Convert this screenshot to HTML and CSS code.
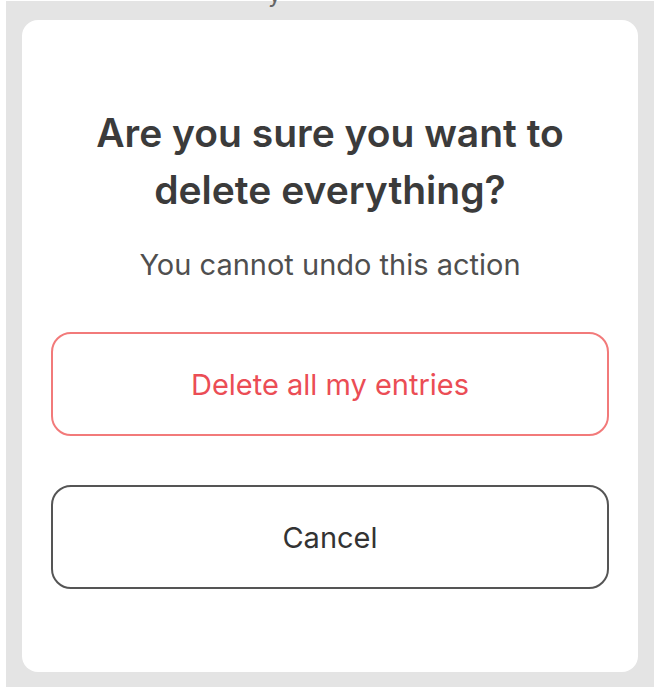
FILE: index.html
```html
<!DOCTYPE html>
<html>
<head>
<meta charset="utf-8">
<link rel="stylesheet" href="styles.css">
</head>
<body>
<div class="backdrop">
  <span class="behind">y</span>
  <div class="dialog">
    <h1 class="title">Are you sure you want to delete everything?</h1>
    <p class="subtitle">You cannot undo this action</p>
    <button class="btn btn-danger">Delete all my entries</button>
    <button class="btn btn-cancel">Cancel</button>
  </div>
</div>
</body>
</html>
```
FILE: styles.css
```css
html, body {
  margin: 0;
  padding: 0;
  background: #ffffff;
  width: 660px;
  height: 687px;
  overflow: hidden;
  font-family: Inter, "Noto Sans", sans-serif;
}
.backdrop {
  position: relative;
  margin: 1px 6px 0 6px;
  height: 686px;
  box-sizing: border-box;
  background: #e4e4e4;
  padding: 19px 16px 15px 16px;
}
.behind {
  position: absolute;
  left: 262px;
  top: -19px;
  font-size: 24px;
  line-height: 24px;
  color: #666;
}
.dialog {
  height: 100%;
  box-sizing: border-box;
  background: #ffffff;
  border-radius: 16px;
  padding: 84px 29px 0 29px;
  display: flex;
  flex-direction: column;
  align-items: stretch;
}
.title {
  margin: 0;
  text-align: center;
  font-size: 39px;
  line-height: 57px;
  font-weight: 600;
  color: #3b3b3b;
  padding: 0 30px;
}
.subtitle {
  margin: 27px 0 0 0;
  text-align: center;
  font-size: 29px;
  line-height: 40px;
  color: #4f4f4f;
}
.btn {
  display: block;
  width: 100%;
  height: 104px;
  background: #fff;
  border-radius: 20px;
  font-family: inherit;
  font-size: 29px;
  cursor: pointer;
}
.btn-danger {
  margin-top: 47px;
  border: 2px solid #f27a7a;
  color: #eb4d55;
}
.btn-cancel {
  margin-top: 49px;
  border: 2px solid #555555;
  color: #333333;
}
```
